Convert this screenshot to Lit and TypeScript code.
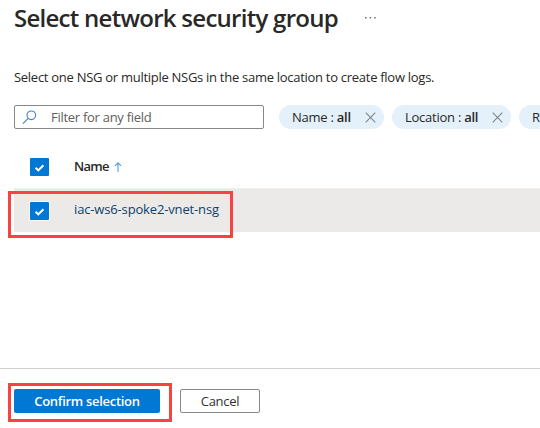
import { LitElement, html, css } from "lit";
import { customElement } from "lit/decorators.js";

const check = html`<svg class="check" viewBox="0 0 19 18" width="19" height="18">
  <path d="M5.6 9.8 8.3 12.4 13.4 7.3" fill="none" stroke="#fff" stroke-width="2.1" />
</svg>`;

const cross = html`<svg class="cross" viewBox="0 0 11 11" width="11" height="11">
  <path d="M.7 .7 10.3 10.3M10.3 .7 .7 10.3" fill="none" stroke="#7c8489" stroke-width="1.05" />
</svg>`;

@customElement("app-root")
export class AppRoot extends LitElement {
  static styles = css`
    :host {
      display: block;
      position: relative;
      width: 540px;
      height: 428px;
      overflow: hidden;
      background: #fff;
      color: #292827;
      font: 13px/18px "Open Sans", "Noto Sans", sans-serif;
      white-space: nowrap;
    }
    * { box-sizing: border-box; }
    svg { display: block; flex: none; }
    .page { display: flex; flex-direction: column; height: 428px; }
    header { display: flex; height: 68px; padding: 2px 0 0 14px; }
    h1 { margin: 0; width: 350px; font-size: 24px; line-height: 32px; font-weight: 600; letter-spacing: -0.73px; }
    .more { margin-top: 14px; }
    .desc { height: 37px; padding: 0 0 0 14px; letter-spacing: -0.28px; }
    .filters { display: flex; height: 24px; padding-left: 14px; }
    .search {
      display: flex; flex: none; align-items: center; width: 250px; height: 24px; margin-right: 15px; padding-left: 7px;
      border: 1px solid #8a8886; border-radius: 2px; color: #605e5c;
    }
    .search span { margin-left: 14px; letter-spacing: -0.28px; }
    .pill {
      display: flex; align-items: center; flex: none; height: 24px; margin-right: 8px; padding: 0 8px 0 13px;
      border-radius: 12px; background: #e4f1fb; letter-spacing: -0.25px; justify-content: space-between;
    }
    .pill b { font-weight: 600; }
    .name { width: 105px; }
    .loc { width: 119px; }
    .res { width: 150px; }
    .row { display: flex; margin-left: 14px; padding-left: 16px; }
    .head { height: 59px; padding-top: 29px; font-weight: 600; letter-spacing: -0.75px; }
    .head > span { margin-top: -1px; }
    .item { height: 44px; padding-top: 13px; background: #ebeae9; border-top: 1px solid #f1f0ef; }
    .box { width: 19px; height: 18px; margin-right: 25px; border-radius: 1px; background: #0078d4; }
    .item .box { box-shadow: 0 0 0 1px #fffc; }
    .link { margin-top: -2px; color: #103f68; letter-spacing: -0.15px; }
    .arrow { margin: 4px 0 0 5px; }
    footer { display: flex; gap: 20px; margin-top: auto; height: 60px; padding: 20px 0 0 14px; border-top: 1px solid #d2d0ce; }
    button { height: 24px; padding: 0; border-radius: 2px; font: inherit; line-height: 23px; }
    .ok { width: 146px; border: 0; background: #0078d4; color: #fff; font-weight: 600; letter-spacing: -0.3px; line-height: 25px; }
    .cancel { width: 80px; border: 1px solid #8a8886; background: #fff; color: #323130; letter-spacing: -0.3px; }
    .mark { position: absolute; left: 8px; border: 3px solid #fb4242; }
    .mark-row { top: 191px; width: 225px; height: 47px; }
    .mark-ok { top: 383px; width: 164px; height: 39px; }
  `;

  render() {
    return html`
      <div class="page">
        <header>
          <h1><span>Select network security group</span></h1>
          <svg class="more" width="13" height="4" viewBox="0 0 13 4">
            <path d="M1 1h1.6v1.6H1zM5.6 1h1.6v1.6H5.6zM10.1 1h1.6v1.6h-1.6z" fill="#777" />
          </svg>
        </header>
        <div class="desc"><span>Select one NSG or multiple NSGs in the same location to create flow logs.</span></div>
        <div class="filters">
          <div class="search">
            <svg width="15" height="15" viewBox="0 0 15 15" fill="none" stroke="#3f7fc9" stroke-width="1.1">
              <circle cx="9.3" cy="5.3" r="4.3" /><path d="M6.2 8.4.9 13.7" />
            </svg>
            <span>Filter for any field</span>
          </div>
          <div class="pill name"><span>Name : <b>all</b></span>${cross}</div>
          <div class="pill loc"><span>Location : <b>all</b></span>${cross}</div>
          <div class="pill res"><span>R</span></div>
        </div>
        <div class="row head">
          <div class="box">${check}</div><span>Name</span>
          <svg class="arrow" width="8" height="11" viewBox="0 0 8 11" fill="none" stroke="#4ba0de" stroke-width="1.1">
            <path d="M4 10V.8M1 3.8 4 .8 7 3.8" />
          </svg>
        </div>
        <div class="row item">
          <div class="box">${check}</div><span class="link">iac-ws6-spoke2-vnet-nsg</span>
        </div>
        <footer>
          <button class="ok">Confirm selection</button>
          <button class="cancel">Cancel</button>
        </footer>
      </div>
      <div class="mark mark-row"></div>
      <div class="mark mark-ok"></div>
    `;
  }
}
